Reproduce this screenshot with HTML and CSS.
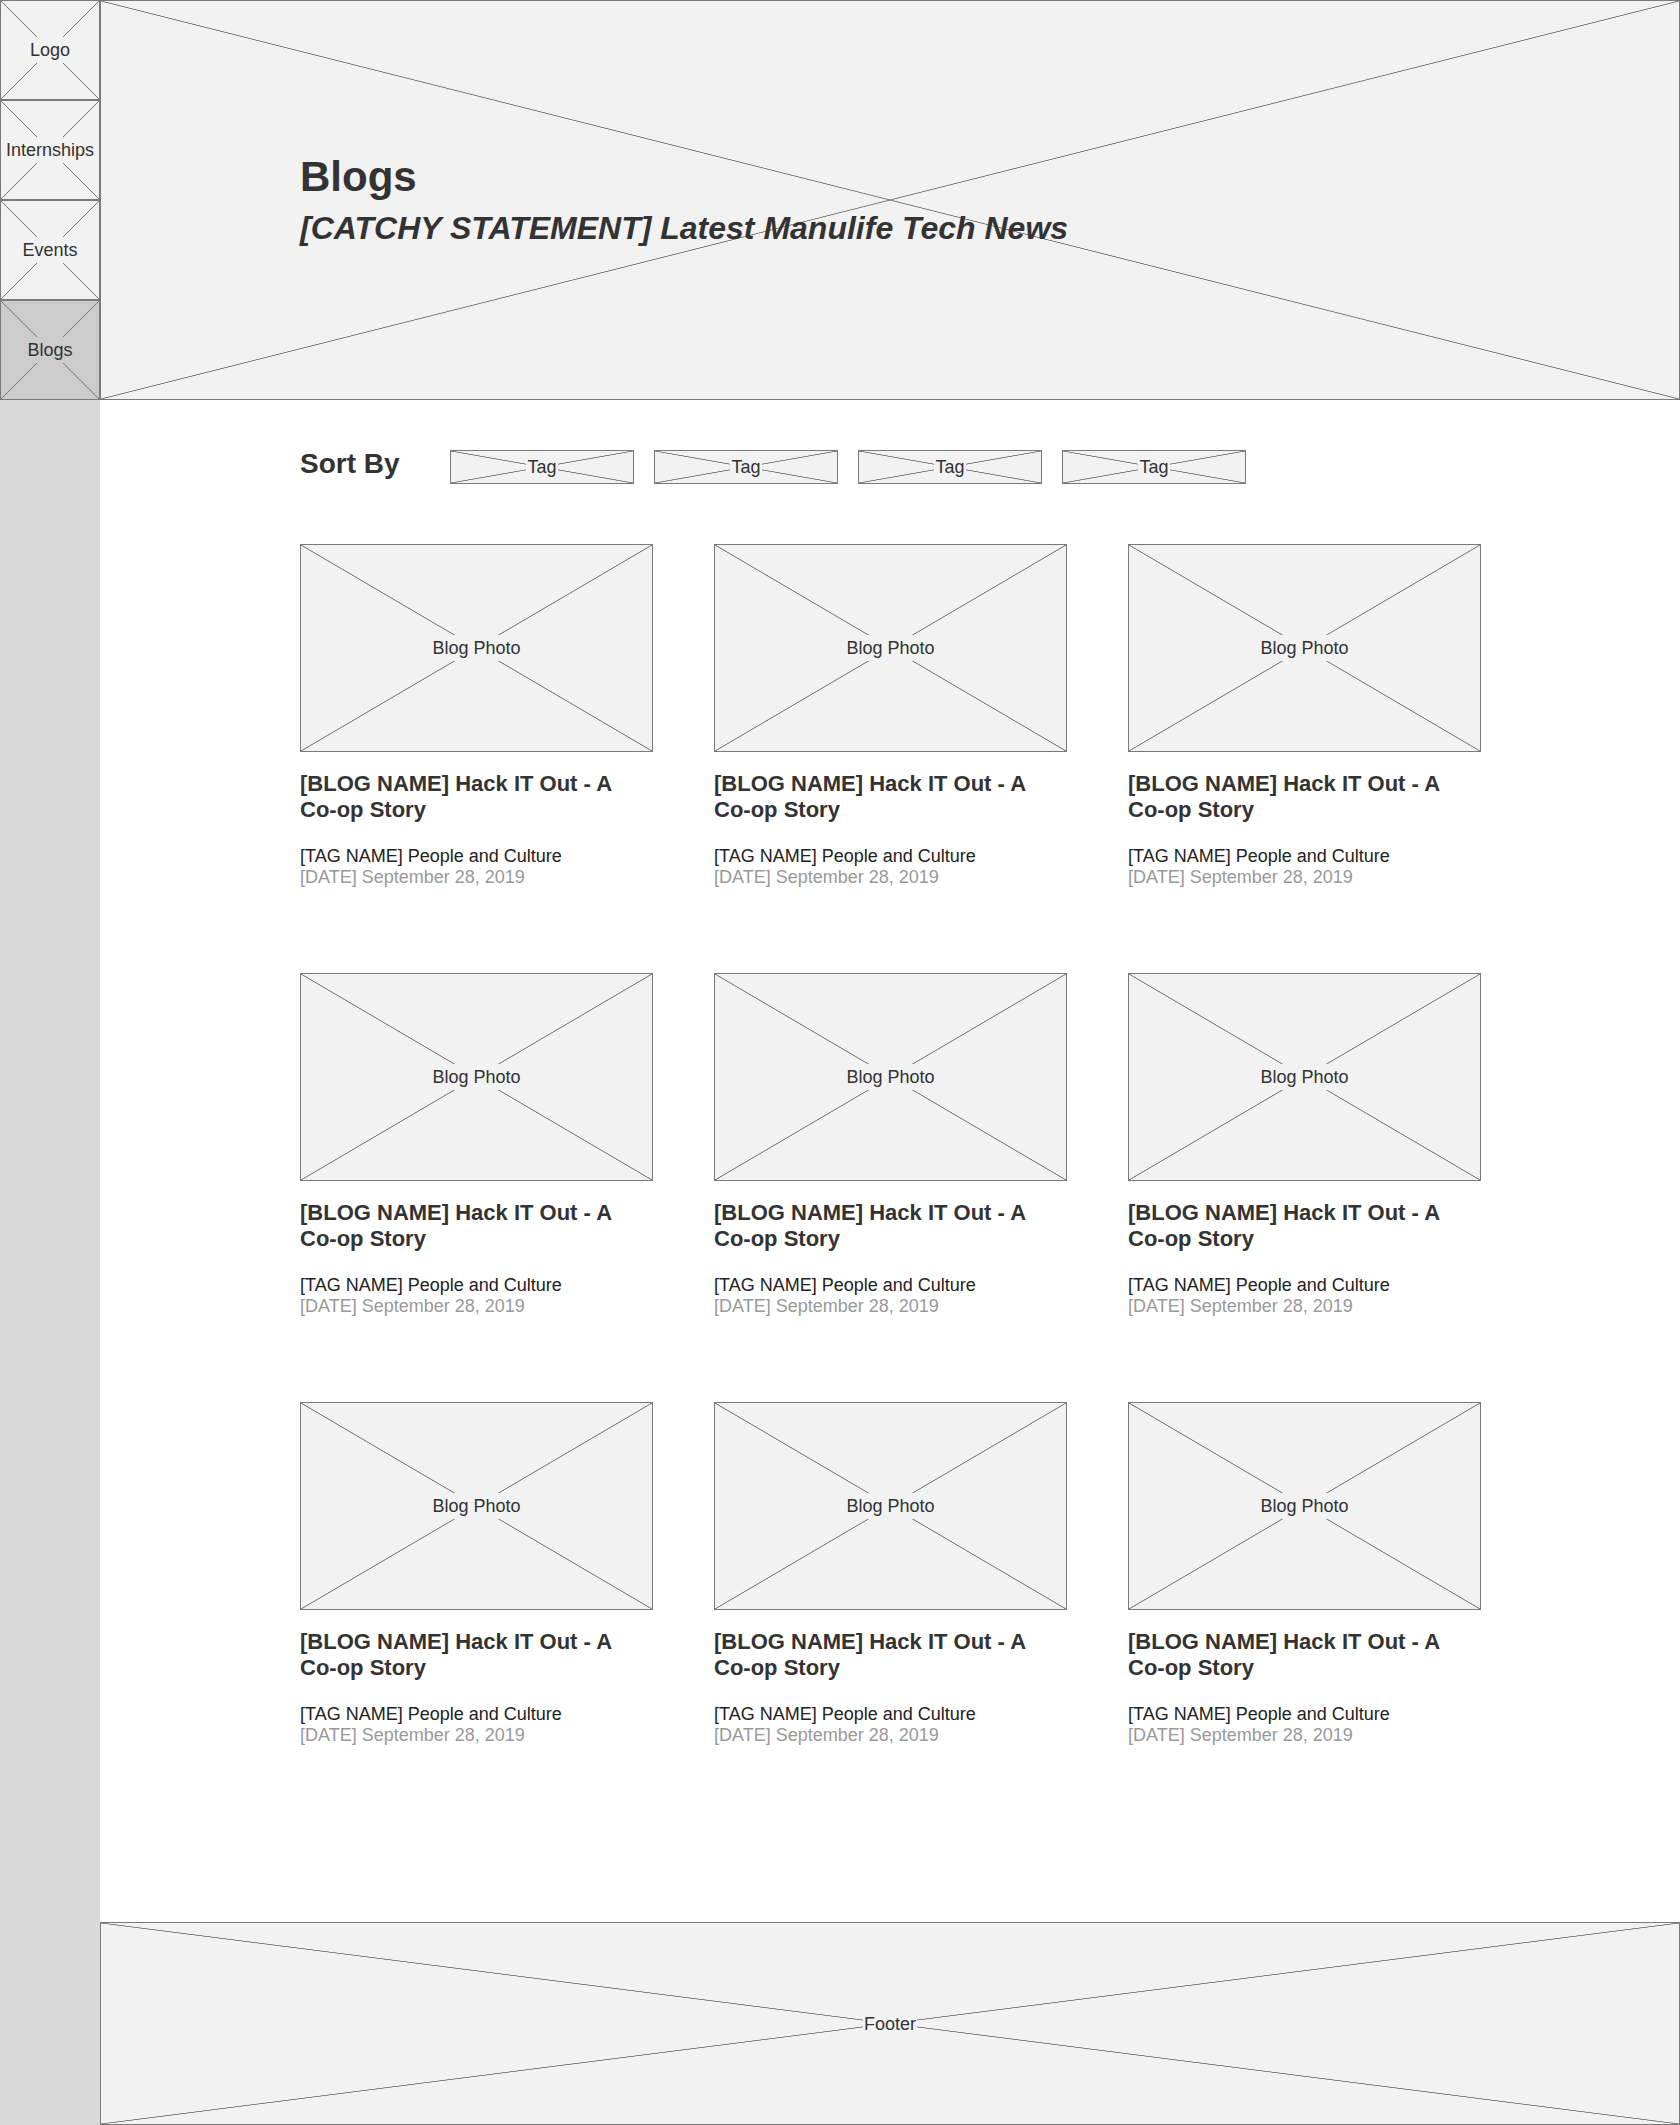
FILE: index.html
```html
<!DOCTYPE html>
<html lang="en">
<head>
<meta charset="utf-8">
<title>Blogs</title>
<link rel="stylesheet" href="styles.css">
</head>
<body>
<div class="page">
  <nav class="sidebar">
    <a class="nav-item ph"><span class="ph-label">Logo</span></a>
    <a class="nav-item ph"><span class="ph-label">Internships</span></a>
    <a class="nav-item ph"><span class="ph-label">Events</span></a>
    <a class="nav-item ph active"><span class="ph-label">Blogs</span></a>
  </nav>
  <div class="main">
    <header class="hero ph">
      <h1 class="hero-title">Blogs</h1>
      <p class="hero-sub">[CATCHY STATEMENT] Latest Manulife Tech News</p>
    </header>
    <section class="content">
      <div class="sort-row">
        <h2 class="sort-label">Sort By</h2>
        <div class="tags">
          <button class="tag ph"><span class="ph-label tight">Tag</span></button>
          <button class="tag ph"><span class="ph-label tight">Tag</span></button>
          <button class="tag ph"><span class="ph-label tight">Tag</span></button>
          <button class="tag ph"><span class="ph-label tight">Tag</span></button>
        </div>
      </div>
      <div class="grid">
        <article class="card">
          <div class="photo ph"><span class="ph-label">Blog Photo</span></div>
          <h3 class="card-title">[BLOG NAME] Hack IT Out - A Co-op Story</h3>
          <p class="card-tag">[TAG NAME] People and Culture</p>
          <p class="card-date">[DATE] September 28, 2019</p>
        </article>
        <article class="card">
          <div class="photo ph"><span class="ph-label">Blog Photo</span></div>
          <h3 class="card-title">[BLOG NAME] Hack IT Out - A Co-op Story</h3>
          <p class="card-tag">[TAG NAME] People and Culture</p>
          <p class="card-date">[DATE] September 28, 2019</p>
        </article>
        <article class="card">
          <div class="photo ph"><span class="ph-label">Blog Photo</span></div>
          <h3 class="card-title">[BLOG NAME] Hack IT Out - A Co-op Story</h3>
          <p class="card-tag">[TAG NAME] People and Culture</p>
          <p class="card-date">[DATE] September 28, 2019</p>
        </article>
        <article class="card">
          <div class="photo ph"><span class="ph-label">Blog Photo</span></div>
          <h3 class="card-title">[BLOG NAME] Hack IT Out - A Co-op Story</h3>
          <p class="card-tag">[TAG NAME] People and Culture</p>
          <p class="card-date">[DATE] September 28, 2019</p>
        </article>
        <article class="card">
          <div class="photo ph"><span class="ph-label">Blog Photo</span></div>
          <h3 class="card-title">[BLOG NAME] Hack IT Out - A Co-op Story</h3>
          <p class="card-tag">[TAG NAME] People and Culture</p>
          <p class="card-date">[DATE] September 28, 2019</p>
        </article>
        <article class="card">
          <div class="photo ph"><span class="ph-label">Blog Photo</span></div>
          <h3 class="card-title">[BLOG NAME] Hack IT Out - A Co-op Story</h3>
          <p class="card-tag">[TAG NAME] People and Culture</p>
          <p class="card-date">[DATE] September 28, 2019</p>
        </article>
        <article class="card">
          <div class="photo ph"><span class="ph-label">Blog Photo</span></div>
          <h3 class="card-title">[BLOG NAME] Hack IT Out - A Co-op Story</h3>
          <p class="card-tag">[TAG NAME] People and Culture</p>
          <p class="card-date">[DATE] September 28, 2019</p>
        </article>
        <article class="card">
          <div class="photo ph"><span class="ph-label">Blog Photo</span></div>
          <h3 class="card-title">[BLOG NAME] Hack IT Out - A Co-op Story</h3>
          <p class="card-tag">[TAG NAME] People and Culture</p>
          <p class="card-date">[DATE] September 28, 2019</p>
        </article>
        <article class="card">
          <div class="photo ph"><span class="ph-label">Blog Photo</span></div>
          <h3 class="card-title">[BLOG NAME] Hack IT Out - A Co-op Story</h3>
          <p class="card-tag">[TAG NAME] People and Culture</p>
          <p class="card-date">[DATE] September 28, 2019</p>
        </article>
      </div>
    </section>
    <footer class="footer ph"><span class="ph-label tight">Footer</span></footer>
  </div>
</div>
</body>
</html>
```

FILE: styles.css
```css
html, body {
  margin: 0;
  padding: 0;
}

body {
  font-family: "Liberation Sans", Arial, Helvetica, sans-serif;
  color: #333333;
  background: #ffffff;
}

.page {
  display: flex;
  min-height: 100vh;
}

/* Wireframe placeholder: light box with an X across it */
.ph {
  --x-line: #828282;
  --ph-bg: #f2f2f2;
  box-sizing: border-box;
  border: 1px solid #7a7a7a;
  background:
    linear-gradient(to top right,
      transparent calc(50% - 0.75px),
      var(--x-line) calc(50% - 0.25px),
      var(--x-line) calc(50% + 0.25px),
      transparent calc(50% + 0.75px)),
    linear-gradient(to bottom right,
      transparent calc(50% - 0.75px),
      var(--x-line) calc(50% - 0.25px),
      var(--x-line) calc(50% + 0.25px),
      transparent calc(50% + 0.75px)),
    var(--ph-bg);
  display: flex;
  align-items: center;
  justify-content: center;
}

.ph-label {
  background: var(--ph-bg);
  font-size: 18px;
  line-height: 22px;
  padding: 2px 3px;
  color: #333333;
}

.ph-label.tight {
  padding: 1px 1px;
}

/* Sidebar */
.sidebar {
  width: 100px;
  flex: none;
  background: #d9d9d9;
  display: flex;
  flex-direction: column;
}

.nav-item {
  height: 100px;
  width: 100px;
  text-decoration: none;
}

.nav-item.active {
  --ph-bg: #cccccc;
}

/* Main column */
.main {
  flex: 1;
  display: flex;
  flex-direction: column;
  min-width: 0;
}

.hero {
  height: 400px;
  flex-direction: column;
  align-items: flex-start;
  justify-content: center;
  padding-left: 199px;
}

.hero-title {
  margin: 0;
  font-size: 42px;
  line-height: 48px;
  font-weight: 700;
  color: #333333;
}

.hero-sub {
  margin: 8px 0 0;
  font-size: 32px;
  line-height: 38px;
  font-weight: 700;
  font-style: italic;
  color: #333333;
}

.content {
  padding: 48px 0 0 200px;
}

.sort-row {
  display: flex;
  align-items: flex-start;
  gap: 50px;
}

.sort-label {
  margin: 0;
  width: 100px;
  font-size: 28px;
  line-height: 32px;
  font-weight: 700;
  color: #333333;
  white-space: nowrap;
}

.tags {
  display: flex;
  gap: 20px;
  margin-top: 2px;
}

.tag {
  width: 184px;
  height: 34px;
  padding: 0;
  font-family: inherit;
}

.tag .ph-label {
  font-size: 18px;
  line-height: 20px;
}

/* Blog grid */
.grid {
  margin-top: 60px;
  display: grid;
  grid-template-columns: repeat(3, 353px);
  column-gap: 61px;
  row-gap: 85px;
}

.photo {
  height: 208px;
}

.card-title {
  margin: 19px 0 0;
  font-size: 22px;
  line-height: 26px;
  font-weight: 700;
  color: #333333;
}

.card-tag {
  margin: 23px 0 0;
  font-size: 18px;
  line-height: 21px;
  color: #222222;
}

.card-date {
  margin: 0;
  font-size: 18px;
  line-height: 21px;
  color: #999999;
}

/* Footer */
.footer {
  margin-top: auto;
  height: 203px;
}
```
